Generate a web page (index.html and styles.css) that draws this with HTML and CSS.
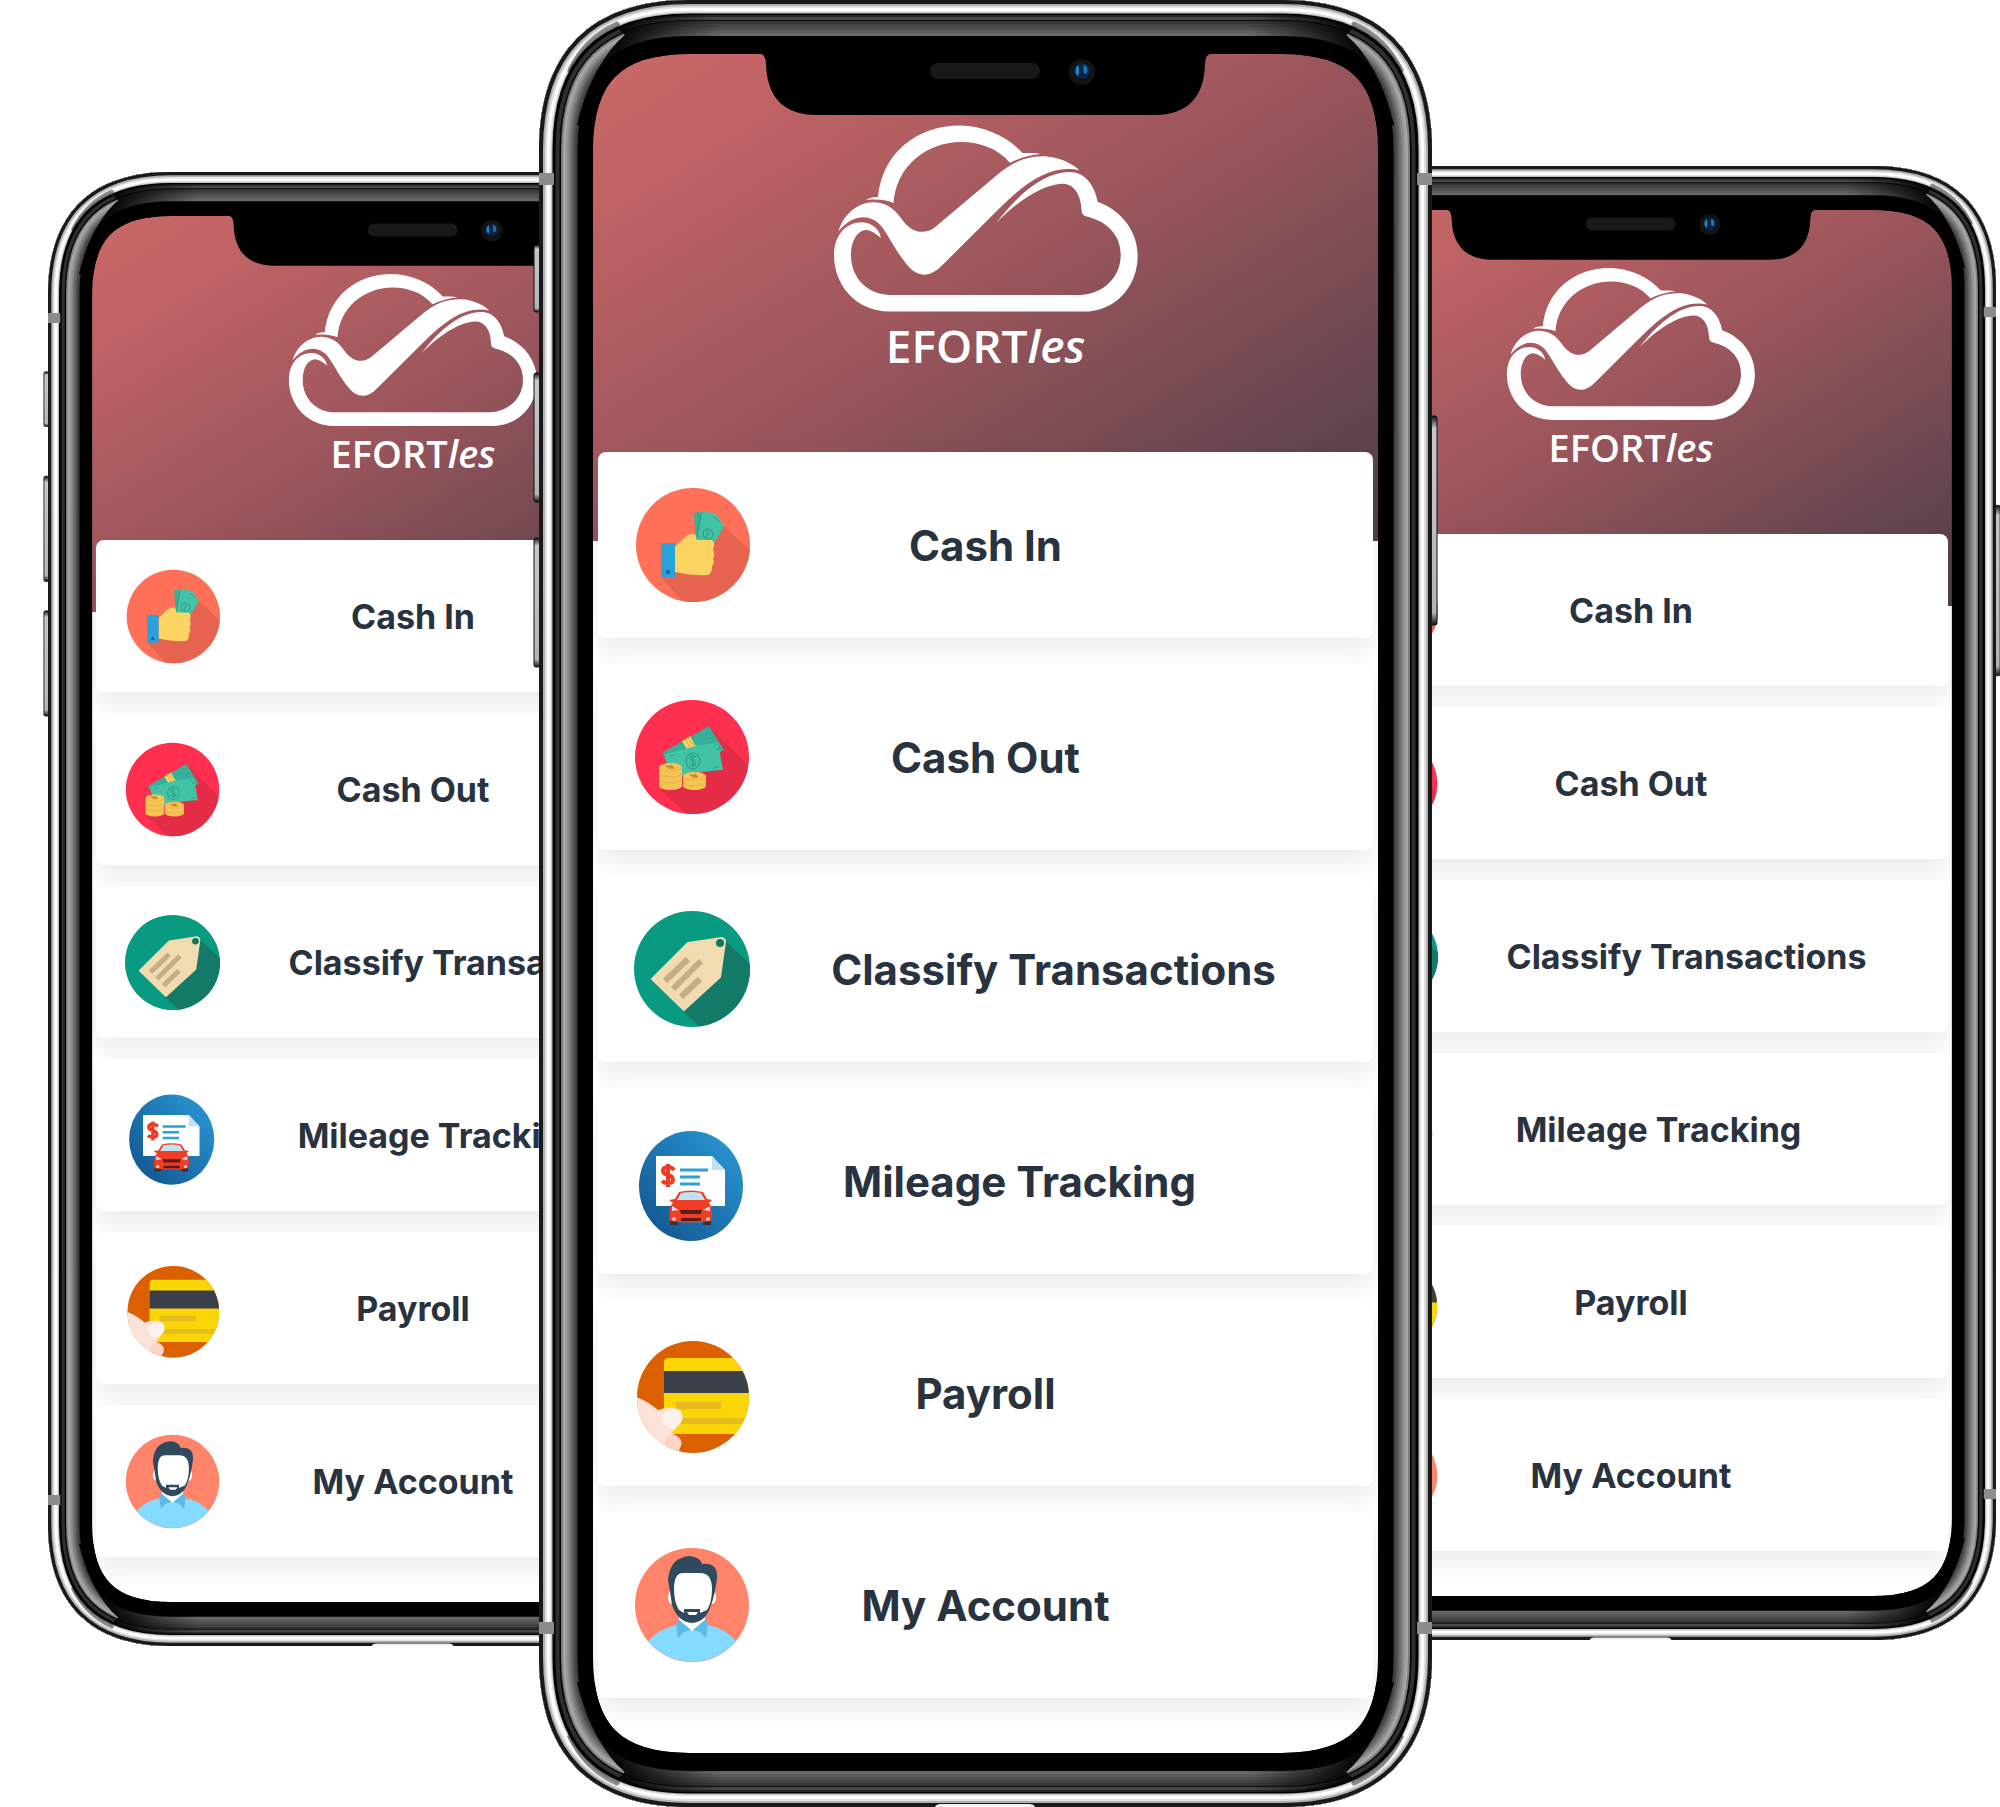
FILE: index.html
```html
<!DOCTYPE html>
<html lang="en">
<head>
<meta charset="utf-8">
<meta name="viewport" content="width=device-width, initial-scale=1">
<title>EFORTles</title>
<link rel="stylesheet" href="styles.css">
</head>
<body>
<svg class="defs" width="0" height="0" aria-hidden="true">
  <defs>
    <path id="body-shape" d="M0,150 C0,52 52,0 150,0 H743 C841,0 893,52 893,150 V1657 C893,1755 841,1807 743,1807 H150 C52,1807 0,1755 0,1657Z"/>
    <clipPath id="clip-body"><use href="#body-shape"/></clipPath>
    <clipPath id="clip-ends">
      <path d="M48,0 L86,35 Q54,62 38,125 H855 Q839,62 807,35 L845,0Z M48,1807 L86,1772 Q54,1745 38,1682 H855 Q839,1745 807,1772 L845,1807Z"/>
    </clipPath>
    <linearGradient id="end-fade" x1="80" x2="813" y1="0" y2="0" gradientUnits="userSpaceOnUse">
      <stop offset="0" stop-color="#000" stop-opacity=".9"/>
      <stop offset=".14" stop-color="#000" stop-opacity="0"/>
      <stop offset=".86" stop-color="#000" stop-opacity="0"/>
      <stop offset="1" stop-color="#000" stop-opacity=".9"/>
    </linearGradient>
    <linearGradient id="key" x1="0" x2="0" y1="0" y2="1">
      <stop offset="0" stop-color="#111"/><stop offset=".06" stop-color="#c8c8c8"/>
      <stop offset=".94" stop-color="#b4b4b4"/><stop offset="1" stop-color="#111"/>
    </linearGradient>
    <linearGradient id="sea" x1="0" x2="1" y1="1" y2="0">
      <stop offset="0" stop-color="#10508a"/><stop offset="1" stop-color="#2b9cd8"/>
    </linearGradient>
    <clipPath id="round-in"><circle cx="59" cy="58" r="57"/></clipPath>
    <clipPath id="round-out"><circle cx="58" cy="58" r="57"/></clipPath>
    <clipPath id="round-tag"><circle cx="58" cy="58" r="58"/></clipPath>
    <clipPath id="round-pay"><circle cx="59" cy="62" r="56"/></clipPath>

    <g id="frame">
      <g stroke="#111" stroke-width="1" fill="url(#key)">
        <rect x="-5" y="245" width="6" height="67" rx="2"/>
        <rect x="-5" y="373" width="6" height="129" rx="2"/>
        <rect x="-5" y="538" width="6" height="129" rx="2"/>
        <rect x="892" y="416" width="6" height="209" rx="2"/>
      </g>
      <g clip-path="url(#clip-body)" fill="none">
        <use href="#body-shape" stroke="#000" stroke-width="108"/>
        <use href="#body-shape" stroke="#3c3c3c" stroke-width="77"/>
        <use href="#body-shape" stroke="#4c4c4c" stroke-width="73"/>
        <use href="#body-shape" stroke="#5f5f5f" stroke-width="69"/>
        <use href="#body-shape" stroke="#737373" stroke-width="65"/>
        <use href="#body-shape" stroke="#868686" stroke-width="61"/>
        <use href="#body-shape" stroke="#989898" stroke-width="57"/>
        <use href="#body-shape" stroke="#a6a6a6" stroke-width="53"/>
        <use href="#body-shape" stroke="#7c7c7c" stroke-width="48"/>
        <use href="#body-shape" stroke="#000" stroke-width="44"/>
        <use href="#body-shape" stroke="#2e2e2e" stroke-width="41"/>
        <use href="#body-shape" stroke="#000" stroke-width="33"/>
        <g clip-path="url(#clip-ends)">
          <use href="#body-shape" stroke="#000" stroke-width="108"/>
          <use href="#body-shape" stroke="#686868" stroke-width="72"/>
          <use href="#body-shape" stroke="#5c5c5c" stroke-width="66"/>
          <use href="#body-shape" stroke="#505050" stroke-width="60"/>
          <use href="#body-shape" stroke="#444" stroke-width="54"/>
          <use href="#body-shape" stroke="#383838" stroke-width="48"/>
          <use href="#body-shape" stroke="#0a0a0a" stroke-width="42"/>
          <use href="#body-shape" stroke="#484848" stroke-width="40"/>
          <use href="#body-shape" stroke="#262626" stroke-width="34"/>
          <use href="#body-shape" stroke="url(#end-fade)" stroke-width="106"/>
        </g>
        <use href="#body-shape" stroke="#000" stroke-width="30"/>
        <use href="#body-shape" stroke="#b4b4b4" stroke-width="27"/>
        <use href="#body-shape" stroke="#e2e2e2" stroke-width="25"/>
        <use href="#body-shape" stroke="#fff" stroke-width="22"/>
        <use href="#body-shape" stroke="#e0e0e0" stroke-width="16"/>
        <use href="#body-shape" stroke="#b0b0b0" stroke-width="12"/>
        <g stroke="#000" stroke-opacity=".45" stroke-width="5" stroke-linecap="round">
          <path d="M31,70 C42,48 56,34 78,24"/><path d="M862,70 C851,48 837,34 815,24"/>
          <path d="M31,1737 C42,1759 56,1773 78,1783"/><path d="M862,1737 C851,1759 837,1773 815,1783"/>
        </g>
        <use href="#body-shape" stroke="#191919" stroke-width="8"/>
        <path fill="#8c8c8c" d="M0,173h15v12H0Z M878,173h15v12h-15Z M0,1622h15v12H0Z M878,1622h15v12h-15Z"/>
        <path fill="#f2f2f2" d="M396,1807 Q397,1804 402,1804 H490 Q495,1804 496,1807Z"/>
      </g>
      <path d="M218,50 V53 Q227,53 227,64 C228,98 245,115 278,115 H615 C648,115 665,98 666,64 Q666,53 675,53 V50Z"/>
      <rect x="391" y="63" width="110" height="16" rx="8" fill="#181818"/>
      <circle cx="543" cy="72" r="13" fill="#131313"/>
      <circle cx="543" cy="71" r="8" fill="#0b2440"/>
      <path d="M539,65 a7,7 0 0 0 0,11 q2,-5 0,-11Z" fill="#2288cc"/>
      <path d="M545,64 q6,5 2,10 q-4,0 -2,-10Z" fill="#1c74b8"/>
    </g>

    <symbol id="cloud" viewBox="90 40 925 570">
      <g fill="#fff">
        <path d="M228,262 C240,130 345,47 475,47 C548,48 618,80 662,130 C682,130 704,129 717,133 C686,136 652,145 624,159 C590,118 535,97 478,97 C372,97 282,172 275,280 C250,270 222,268 192,271 C204,263 216,261 228,262Z"/>
        <path d="M110,365 C122,318 165,278 215,278 C262,279 283,306 303,333 C328,366 366,379 400,352 L590,192 C636,153 682,138 735,140 C778,144 815,163 833,182 C790,170 742,183 700,208 C660,232 628,262 590,299 L420,468 C384,506 346,503 316,466 C283,427 262,382 240,352 C207,309 150,313 110,365Z"/>
        <path fill-rule="evenodd" d="M583,340 C655,246 730,188 803,187 C850,187 878,226 888,276 C958,301 1008,364 1008,438 C1008,531 941,606 845,606 H262 C166,606 96,530 96,437 C96,378 131,338 180,338 C209,339 232,357 237,385 C222,372 207,362 193,361 C166,362 147,394 147,437 C147,506 198,556 266,556 H832 C905,554 957,503 957,436 C957,379 920,336 852,320 C840,316 840,306 839,298 C837,251 814,222 783,222 C724,224 652,270 583,340Z"/>
      </g>
    </symbol>

    <symbol id="cash-in" viewBox="0 0 116 116">
      <circle cx="59" cy="58" r="57" fill="#ff7058"/>
      <path clip-path="url(#round-in)" fill="#e6644f" d="M90,39 L120,67 V120 H54 L27,90Z"/>
      <path fill="#37b09a" d="M60,26 L66,25 L78,26 L90,39 L80,56 L62,54Z"/>
      <path fill="#43c3a6" d="M67,26 L74,25 L83,28 L90,39 L81,55 L64,54Z"/>
      <path d="M67,27 L63,50 M79,29 L86,35" fill="none" stroke="#2a9781" stroke-width="1"/>
      <ellipse cx="74" cy="47" rx="5" ry="5" fill="none" stroke="#2a9781"/>
      <path d="M76,45q-4,-1 -3,2t-2,3" fill="none" stroke="#2a9781"/>
      <path fill="#fcd462" d="M41,60 L51,50 Q56,46 61,47 L63,53 H77 Q81,54 80,60 Q78,62 80,65 Q81,69 79,72 Q81,76 78,79 Q78,87 74,88 Q60,89 41,85Z"/>
      <path fill="#27a2db" d="M27,56H41V90H27Z"/><circle cx="34" cy="85" r="2" fill="#10618f"/>
    </symbol>

    <symbol id="cash-out" viewBox="0 0 116 116">
      <circle cx="58" cy="58" r="57" fill="#ff304f"/>
      <path clip-path="url(#round-out)" fill="#e42c47" d="M75,27 L120,72 V120 H58 L27,91Z"/>
      <path fill="#37b09a" d="M28,54 L75,27 L90,51 L44,76Z"/>
      <path fill="#fcd462" d="M48,42 L56,37 L62,48 L54,52Z"/>
      <path d="M51,40l6,10M54,38l6,10" stroke="#d8a83d"/>
      <path fill="#43c3a6" d="M30,56 Q45,51 58,48 T84,44 L89,71 Q68,72 49,77 L35,70Z"/>
      <ellipse cx="59" cy="62" rx="7" ry="8" fill="none" stroke="#2a9781"/>
      <path d="M62,58q-6,-3 -6,1q0,2 3,3t3,3q-1,3 -6,0M59,56v12M36,57l4,-1M79,47l3,-1M80,69l5,-1M74,40l5,-2M82,51l4,-2" fill="none" stroke="#2a9781"/>
      <path fill="#f5c453" d="M25,68 a11.500,4 0 0 1 23,0 V87 a11.500,4 0 0 1 -23,0Z M49,77 a11.500,4 0 0 1 23,0 V87 a11.500,4 0 0 1 -23,0Z"/>
      <path d="M25,68a11.500,4 0 0 0 23,0M25,74a11.500,4 0 0 0 23,0M25,80a11.500,4 0 0 0 23,0M49,77a11.500,4 0 0 0 23,0M49,83a11.500,4 0 0 0 23,0" fill="none" stroke="#e8b348"/>
      <path d="M32,67l8,2M38,66l-3,4M56,76l8,2M62,75l-3,4" stroke="#d2813a" stroke-width="2"/>
    </symbol>

    <symbol id="tag" viewBox="0 0 116 116">
      <circle cx="58" cy="58" r="58" fill="#089b81"/>
      <path clip-path="url(#round-tag)" fill="#137a67" d="M91,29 L120,57 V120 H70 L49,100Z"/>
      <path fill="#f3dbb1" stroke="#f3dbb1" stroke-width="2" stroke-linejoin="round" d="M18,68 L54,32 L88,27 Q91,28 91,31 L86,66 L50,99Z"/>
      <circle cx="86" cy="32" r="4" fill="#0b7865"/>
      <path d="M31,70L54,48M39,78L67,50M47,86L66,68" stroke="#c5ad87" stroke-width="6"/>
    </symbol>

    <symbol id="mileage" viewBox="0 0 116 116">
      <ellipse cx="57" cy="63" rx="52" ry="55" fill="url(#sea)"/>
      <path fill="#fff" d="M22,33H78L91,47V83H22Z"/><path fill="#bfe3f5" d="M78,33L91,47H78Z"/>
      <path d="M46,47H74M46,54H66M46,61H66" stroke="#27a2db" stroke-width="3"/>
      <path d="M40,47 Q38,44 34,44 Q29,44 29,48 Q29,51 34,52 Q39,53 39,57 Q39,60 34,60 Q30,60 28,58 M34,41V64" fill="none" stroke="#ee3b24" stroke-width="4"/>
      <path fill="#333" d="M36,94h8v8h-8Z M69,94h8v8h-8Z"/>
      <path fill="#f03d25" d="M41,76 L45,69 Q57,66 69,69 L73,76 L78,77 L75,80 Q79,84 78,92 L77,98 Q57,101 36,98 Q34,84 39,80 L35,77Z"/>
      <path fill="#bfe3f5" d="M43,77 L47,70 Q57,68 67,70 L71,77Z M38,83 L45,87 L38,88Z M76,83 L69,87 L76,88Z"/>
      <path fill="#5b1d1a" d="M46,87H68L67,91H47Z M47,95H67V98H47Z"/>
      <circle cx="40" cy="96" r="2" fill="#f7c5b8"/><circle cx="74" cy="96" r="2" fill="#f7c5b8"/>
    </symbol>

    <symbol id="payroll" viewBox="0 0 116 116">
      <g clip-path="url(#round-pay)">
        <path fill="#dc6000" d="M0,0H120V120H0Z"/>
        <path fill="#fad607" d="M34,23H120V99H30V28Q30,23 34,23Z"/>
        <path fill="#3b3f4a" d="M30,36H120V58H30Z"/>
        <path fill="#e6bd1e" d="M42,67H87V74H42Z M44,83H120V89H44Z"/>
        <path fill="#fbd3c8" d="M20,92 L36,98 Q50,102 47,111 L43,120 H10Z"/>
        <path fill="#fde2d8" d="M0,61 Q14,66 24,75 Q38,70 46,75 Q52,82 45,90 L32,104 Q30,110 34,118 L0,120Z"/>
        <path fill="#fdf1ed" d="M28,80 Q38,72 45,76 Q51,83 44,90 Q40,95 35,93 Q28,90 28,80Z"/>
      </g>
    </symbol>

    <symbol id="account" viewBox="0 0 116 116">
      <circle cx="58" cy="58" r="57" fill="#ff8469"/>
      <path fill="#fff" d="M45,70H71V80L58,86L45,80Z"/>
      <path fill="#84dbff" d="M14,94 Q26,81 43,78 L58,84 L73,78 Q91,81 102,94 A57,57 0 0 1 14,94Z"/>
      <ellipse cx="38" cy="50" rx="4" ry="7" fill="#fff"/><ellipse cx="78" cy="50" rx="4" ry="7" fill="#fff"/>
      <path fill="#5bbbe8" d="M44,72 L57,83 L50,85 L44,91 Q41,81 44,72Z M72,72 L59,83 L66,85 L72,91 Q75,81 72,72Z"/>
      <path fill="#2f4a5e" d="M38,58 Q36,44 34,33 Q36,10 56,9 Q66,10 68,17 Q84,15 83,31 Q81,48 77,58 Q72,75 58,76 Q44,75 38,58Z"/>
      <path fill="#fff" d="M40,42 Q40,25 50,26 H66 Q78,26 78,42 Q78,55 73,63 L66,66 V62 H50 V66 L45,63 Q40,55 40,42Z"/>
      <path fill="#fff" d="M53,65H64L62,68H55Z"/>
    </symbol>
  </defs>
</svg>

<main class="stage">
  <section class="phone phone-side phone-left" aria-label="EFORTles app, left">
    <div class="screen">
      <header class="hero">
        <svg class="logo" aria-hidden="true"><use href="#cloud"/></svg>
        <p class="brand">EFORT<em>les</em></p>
      </header>
      <nav>
        <ul class="menu">
          <li><a class="card" href="#"><svg class="icon"><use href="#cash-in"/></svg><span class="label">Cash In</span></a></li>
          <li><a class="card" href="#"><svg class="icon"><use href="#cash-out"/></svg><span class="label">Cash Out</span></a></li>
          <li><a class="card card-long" href="#"><svg class="icon"><use href="#tag"/></svg><span class="label">Classify Transactions</span></a></li>
          <li><a class="card card-medium" href="#"><svg class="icon"><use href="#mileage"/></svg><span class="label">Mileage Tracking</span></a></li>
          <li><a class="card" href="#"><svg class="icon"><use href="#payroll"/></svg><span class="label">Payroll</span></a></li>
          <li><a class="card" href="#"><svg class="icon"><use href="#account"/></svg><span class="label">My Account</span></a></li>
        </ul>
      </nav>
    </div>
    <svg class="frame" viewBox="0 0 893 1807" preserveAspectRatio="none" aria-hidden="true"><use href="#frame"/></svg>
  </section>

  <section class="phone phone-main" aria-label="EFORTles app">
    <div class="screen">
      <header class="hero">
        <svg class="logo" aria-hidden="true"><use href="#cloud"/></svg>
        <h1 class="brand">EFORT<em>les</em></h1>
      </header>
      <nav>
        <ul class="menu">
          <li><a class="card" href="#"><svg class="icon"><use href="#cash-in"/></svg><span class="label">Cash In</span></a></li>
          <li><a class="card" href="#"><svg class="icon"><use href="#cash-out"/></svg><span class="label">Cash Out</span></a></li>
          <li><a class="card card-long" href="#"><svg class="icon"><use href="#tag"/></svg><span class="label">Classify Transactions</span></a></li>
          <li><a class="card card-medium" href="#"><svg class="icon"><use href="#mileage"/></svg><span class="label">Mileage Tracking</span></a></li>
          <li><a class="card" href="#"><svg class="icon"><use href="#payroll"/></svg><span class="label">Payroll</span></a></li>
          <li><a class="card" href="#"><svg class="icon"><use href="#account"/></svg><span class="label">My Account</span></a></li>
        </ul>
      </nav>
    </div>
    <svg class="frame" viewBox="0 0 893 1807" preserveAspectRatio="none" aria-hidden="true"><use href="#frame"/></svg>
  </section>

  <section class="phone phone-side phone-right" aria-label="EFORTles app, right">
    <div class="screen">
      <header class="hero">
        <svg class="logo" aria-hidden="true"><use href="#cloud"/></svg>
        <p class="brand">EFORT<em>les</em></p>
      </header>
      <nav>
        <ul class="menu">
          <li><a class="card" href="#"><svg class="icon"><use href="#cash-in"/></svg><span class="label">Cash In</span></a></li>
          <li><a class="card" href="#"><svg class="icon"><use href="#cash-out"/></svg><span class="label">Cash Out</span></a></li>
          <li><a class="card card-long" href="#"><svg class="icon"><use href="#tag"/></svg><span class="label">Classify Transactions</span></a></li>
          <li><a class="card card-medium" href="#"><svg class="icon"><use href="#mileage"/></svg><span class="label">Mileage Tracking</span></a></li>
          <li><a class="card" href="#"><svg class="icon"><use href="#payroll"/></svg><span class="label">Payroll</span></a></li>
          <li><a class="card" href="#"><svg class="icon"><use href="#account"/></svg><span class="label">My Account</span></a></li>
        </ul>
      </nav>
    </div>
    <svg class="frame" viewBox="0 0 893 1807" preserveAspectRatio="none" aria-hidden="true"><use href="#frame"/></svg>
  </section>
</main>
</body>
</html>
```

FILE: styles.css
```css
* { box-sizing: border-box; }

body {
  margin: 0;
  background: #fff;
  color: #29323f;
  font-family: Inter, "Open Sans", sans-serif;
}

.defs { position: absolute; }
symbol { overflow: visible; }

.stage {
  display: flex;
  align-items: flex-start;
  overflow: hidden;
}

/* Sizes shared by every phone; the side phones use a smaller set. */
.phone {
  --edge: 54px;
  --edge-top: 53px;
  --hero: 488px;
  --hero-pad: 70px;
  --overlap: 89px;
  --logo-w: 308px;
  --logo-h: 190px;
  --brand: 46px;
  --brand-line: 64px;
  --card: 186px;
  --gap: 26px;
  --inset: 5px;
  --card-pad: 36px;
  --icon: 116px;
  --text: 42px;
  --end: 152px;
  --end-medium: 84px;
  --end-long: 16px;
  --foot: 55px;
  position: relative;
  flex: none;
  padding: var(--edge-top) var(--edge) var(--edge);
}

.phone-side {
  --edge: 44px;
  --edge-top: 43px;
  --hero: 397px;
  --hero-pad: 57px;
  --overlap: 72px;
  --logo-w: 252px;
  --logo-h: 155px;
  --brand: 38px;
  --brand-line: 52px;
  --card: 152px;
  --gap: 21px;
  --inset: 4px;
  --card-pad: 29px;
  --icon: 95px;
  --text: 34px;
  --end: 124px;
  --end-medium: 69px;
  --end-long: 13px;
  --foot: 45px;
  width: 36.5%;
}

.phone-left { margin: 172px 0 0 2.4%; }
.phone-main { z-index: 1; width: 44.65%; margin-left: -11.95%; }
.phone-right { margin: 166px 0 0 -8.3%; }

.frame {
  position: absolute;
  inset: 0;
  width: 100%;
  height: 100%;
  overflow: visible;
  pointer-events: none;
}

.screen {
  overflow: hidden;
  padding-bottom: var(--foot);
  background: #fff;
}

.hero {
  display: flex;
  flex-direction: column;
  align-items: center;
  height: var(--hero);
  padding-top: var(--hero-pad);
  background: linear-gradient(to bottom right, #c96868, #c16365 15%, #99555b 50%, #68464f 82%, #523d47);
  color: #fff;
}

.logo {
  width: var(--logo-w);
  height: var(--logo-h);
}

.brand {
  margin: 0;
  font-family: "Open Sans", sans-serif;
  font-size: var(--brand);
  font-weight: 600;
  line-height: var(--brand-line);
}

.menu {
  display: flex;
  flex-direction: column;
  gap: var(--gap);
  margin: calc(-1 * var(--overlap)) var(--inset) 0;
  padding: 0;
  list-style: none;
}

.card {
  display: flex;
  align-items: center;
  height: var(--card);
  padding: 0 var(--end) 0 var(--card-pad);
  border-radius: 8px;
  background: #fff;
  box-shadow: 0 12px 24px rgba(0, 0, 0, .08);
  color: inherit;
  text-decoration: none;
}

.card-medium { padding-right: var(--end-medium); }
.card-long { padding-right: var(--end-long); }

.icon {
  flex: none;
  width: var(--icon);
  height: var(--icon);
  overflow: visible;
}

.label {
  flex: 1;
  font-size: var(--text);
  font-weight: 700;
  text-align: center;
  white-space: nowrap;
}
```
